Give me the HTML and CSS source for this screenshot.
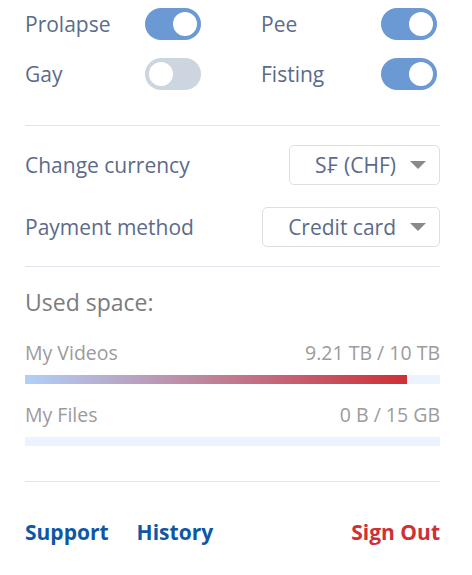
FILE: index.html
```html
<!DOCTYPE html>
<html>
<head>
<meta charset="utf-8">
<link rel="stylesheet" href="styles.css">
</head>
<body>
<div class="panel">
  <div class="toggles">
    <div class="toggle-item"><span class="label">Prolapse</span><span class="switch on"><span class="knob"></span></span></div>
    <div class="toggle-item"><span class="label">Pee</span><span class="switch on"><span class="knob"></span></span></div>
    <div class="toggle-item"><span class="label">Gay</span><span class="switch"><span class="knob"></span></span></div>
    <div class="toggle-item"><span class="label">Fisting</span><span class="switch on"><span class="knob"></span></span></div>
  </div>
  <hr class="divider div1">
  <div class="settings">
    <div class="setting-row">
      <span class="label">Change currency</span>
      <div class="select"><span class="select-value">S₣ (CHF)</span><span class="caret"></span></div>
    </div>
    <div class="setting-row">
      <span class="label">Payment method</span>
      <div class="select"><span class="select-value">Credit card</span><span class="caret"></span></div>
    </div>
  </div>
  <hr class="divider div2">
  <div class="usage">
    <div class="usage-title">Used space:</div>
    <div class="usage-item">
      <div class="usage-head"><span>My Videos</span><span>9.21 TB / 10 TB</span></div>
      <div class="bar"><div class="fill" style="width: 92.1%"></div></div>
    </div>
    <div class="usage-item">
      <div class="usage-head"><span>My Files</span><span>0 B / 15 GB</span></div>
      <div class="bar"><div class="fill" style="width: 0%"></div></div>
    </div>
  </div>
  <hr class="divider div3">
  <div class="links">
    <a class="link blue">Support</a>
    <a class="link blue">History</a>
    <a class="link red signout">Sign Out</a>
  </div>
</div>
</body>
</html>
```
FILE: styles.css
```css
html, body {
  margin: 0;
  padding: 0;
  background: #ffffff;
}
body {
  font-family: "Open Sans", "Noto Sans", sans-serif;
}
.panel {
  padding: 8px 32px 0 25px;
}
.toggles {
  display: grid;
  grid-template-columns: 1fr 1fr;
  column-gap: 57px;
  row-gap: 18px;
}
.toggle-item {
  display: flex;
  align-items: center;
  justify-content: space-between;
  height: 32px;
  padding-right: 3px;
}
.label {
  font-size: 21px;
  color: #5b6b8a;
  line-height: 28px;
}
.switch {
  width: 56px;
  height: 32px;
  border-radius: 16px;
  background: #cdd5e0;
  display: flex;
  align-items: center;
  padding: 0 4px;
  box-sizing: border-box;
}
.switch.on {
  background: #6a99d3;
  justify-content: flex-end;
}
.knob {
  width: 24px;
  height: 24px;
  border-radius: 50%;
  background: #ffffff;
}
.divider {
  border: 0;
  border-top: 1px solid #dfe5ee;
  margin: 0;
}
.div1 { margin-top: 35px; }
.settings {
  display: flex;
  flex-direction: column;
  gap: 22px;
  padding: 19px 0 19px;
}
.setting-row {
  display: flex;
  align-items: center;
  justify-content: space-between;
}
.select {
  height: 40px;
  box-sizing: border-box;
  border: 1px solid #dcdfe5;
  border-radius: 5px;
  display: flex;
  align-items: center;
  padding: 0 13px 0 25px;
  gap: 14px;
}
.select-value {
  font-size: 21px;
  color: #5b6b8a;
}
.caret {
  width: 0;
  height: 0;
  border-left: 8px solid transparent;
  border-right: 8px solid transparent;
  border-top: 8px solid #8a8a8a;
}
.usage {
  padding: 21px 0 35px;
}
.usage-title {
  font-size: 23px;
  line-height: 28px;
  color: #7c7c7c;
  margin-bottom: 25px;
}
.usage-item + .usage-item {
  margin-top: 19px;
}
.usage-head {
  display: flex;
  justify-content: space-between;
  font-size: 19.5px;
  line-height: 24px;
  color: #9b9b9b;
}
.bar {
  margin-top: 10px;
  height: 9px;
  background: #ebf3fe;
}
.fill {
  height: 100%;
  background: linear-gradient(90deg, #b0d0f8 0%, #cf2f36 100%);
}
.links {
  display: flex;
  align-items: center;
  gap: 28px;
  padding-top: 36px;
}
.link {
  font-size: 21px;
  font-weight: 700;
  line-height: 28px;
  text-decoration: none;
}
.blue { color: #0d57a7; }
.red { color: #d12f36; }
.signout { margin-left: auto; }
```
